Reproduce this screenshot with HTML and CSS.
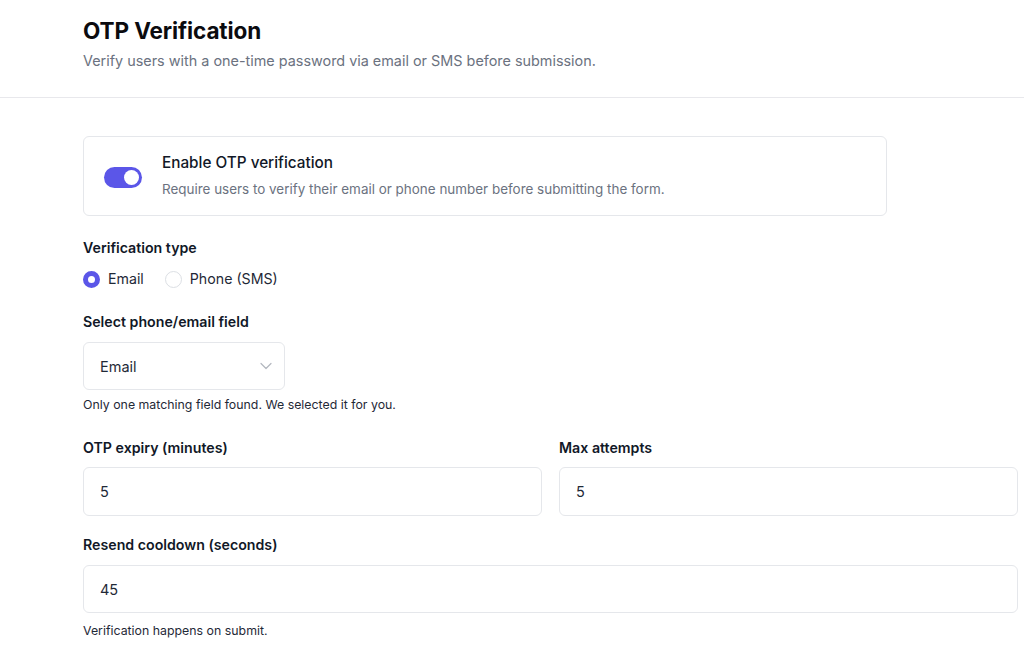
FILE: index.html
```html
<!DOCTYPE html>
<html lang="en">
<head>
<meta charset="utf-8">
<title>OTP Verification</title>
<link rel="stylesheet" href="styles.css">
</head>
<body>
<header class="page-header">
  <h1 class="page-title">OTP Verification</h1>
  <p class="page-subtitle">Verify users with a one-time password via email or SMS before submission.</p>
</header>
<main class="content">
  <section class="card">
    <span class="toggle"><span class="toggle-knob"></span></span>
    <div class="card-text">
      <div class="card-title">Enable OTP verification</div>
      <div class="card-desc">Require users to verify their email or phone number before submitting the form.</div>
    </div>
  </section>

  <div class="field-label mt-22">Verification type</div>
  <div class="radio-row">
    <label class="radio-item"><span class="radio checked"></span>Email</label>
    <label class="radio-item"><span class="radio"></span>Phone (SMS)</label>
  </div>

  <div class="field-label mt-23">Select phone/email field</div>
  <div class="select">
    <span>Email</span>
    <svg class="chevron" width="12" height="8" viewBox="0 0 12 8"><path d="M1 1.5 L6 6.5 L11 1.5" fill="none" stroke="#b3b7bf" stroke-width="1.2" stroke-linecap="round" stroke-linejoin="round"/></svg>
  </div>
  <p class="help">Only one matching field found. We selected it for you.</p>

  <div class="grid-2">
    <div class="col">
      <div class="field-label">OTP expiry (minutes)</div>
      <div class="input">5</div>
    </div>
    <div class="col">
      <div class="field-label">Max attempts</div>
      <div class="input">5</div>
    </div>
  </div>

  <div class="field-label mt-19">Resend cooldown (seconds)</div>
  <div class="input full">45</div>
  <p class="help mt-10">Verification happens on submit.</p>
</main>
</body>
</html>
```

FILE: styles.css
```css
* { box-sizing: border-box; }
html, body { margin: 0; padding: 0; background: #ffffff; }
body {
  font-family: Inter, "Noto Sans", "Liberation Sans", sans-serif;
  color: #111827;
  width: 1024px;
  height: 665px;
  overflow: hidden;
}
.page-header {
  height: 98px;
  border-bottom: 1px solid #e8e8ec;
  padding: 17px 0 0 83px;
}
.page-title {
  margin: 0;
  font-size: 22.5px;
  line-height: 28px;
  font-weight: 700;
  color: #0b0b0f;
  letter-spacing: -0.1px;
}
.page-subtitle {
  margin: 6px 0 0;
  font-size: 14.4px;
  line-height: 20px;
  color: #6b7280;
}
.content {
  padding: 38px 6px 0 83px;
}
.card {
  width: 804px;
  height: 80px;
  border: 1px solid #e5e7eb;
  border-radius: 6px;
  display: flex;
  align-items: center;
  padding: 0 20px;
  gap: 20px;
}
.toggle {
  width: 38px;
  height: 21px;
  border-radius: 11px;
  background: #5b56e8;
  display: flex;
  align-items: center;
  justify-content: flex-end;
  padding-right: 3px;
  margin-top: 2px;
  flex: none;
}
.toggle-knob {
  width: 15px;
  height: 15px;
  border-radius: 50%;
  background: #ffffff;
}
.card-title {
  font-size: 15.3px;
  line-height: 20px;
  font-weight: 500;
  color: #111827;
}
.card-desc {
  margin-top: 6px;
  font-size: 13.45px;
  line-height: 20px;
  color: #6b7280;
}
.field-label {
  font-size: 14.2px;
  line-height: 20px;
  font-weight: 600;
  color: #111827;
}
.mt-22 { margin-top: 22px; }
.mt-23 { margin-top: 23px; }
.mt-19 { margin-top: 19px; }
.mt-10 { margin-top: 10px !important; }
.radio-row {
  display: flex;
  gap: 21px;
  margin-top: 11px;
}
.radio-item {
  display: flex;
  align-items: center;
  gap: 8px;
  font-size: 14.2px;
  line-height: 20px;
  color: #1f2937;
}
.radio {
  width: 17px;
  height: 17px;
  border-radius: 50%;
  border: 1px solid #dcdfe4;
  background: #fff;
  display: inline-block;
}
.radio.checked {
  border: 5.5px solid #5b56e8;
  background: #ffffff;
}
.select {
  margin-top: 10px;
  width: 202px;
  height: 48px;
  border: 1px solid #e5e7eb;
  border-radius: 6px;
  display: flex;
  align-items: center;
  justify-content: space-between;
  padding: 0 12px 0 16px;
  font-size: 14.5px;
  color: #1f2937;
}
.help {
  margin: 7px 0 0;
  font-size: 12.35px;
  line-height: 16px;
  color: #1f2937;
}
.grid-2 {
  margin-top: 25px;
  display: grid;
  grid-template-columns: 1fr 1fr;
  gap: 17px;
  width: 935px;
}
.col .input { margin-top: 9px; height: 49px; }
.input {
  height: 48px;
  border: 1px solid #e5e7eb;
  border-radius: 6px;
  display: flex;
  align-items: center;
  padding: 0 16px;
  font-size: 14.5px;
  color: #1f2937;
}
.input.full {
  margin-top: 10px;
  width: 935px;
}
```
